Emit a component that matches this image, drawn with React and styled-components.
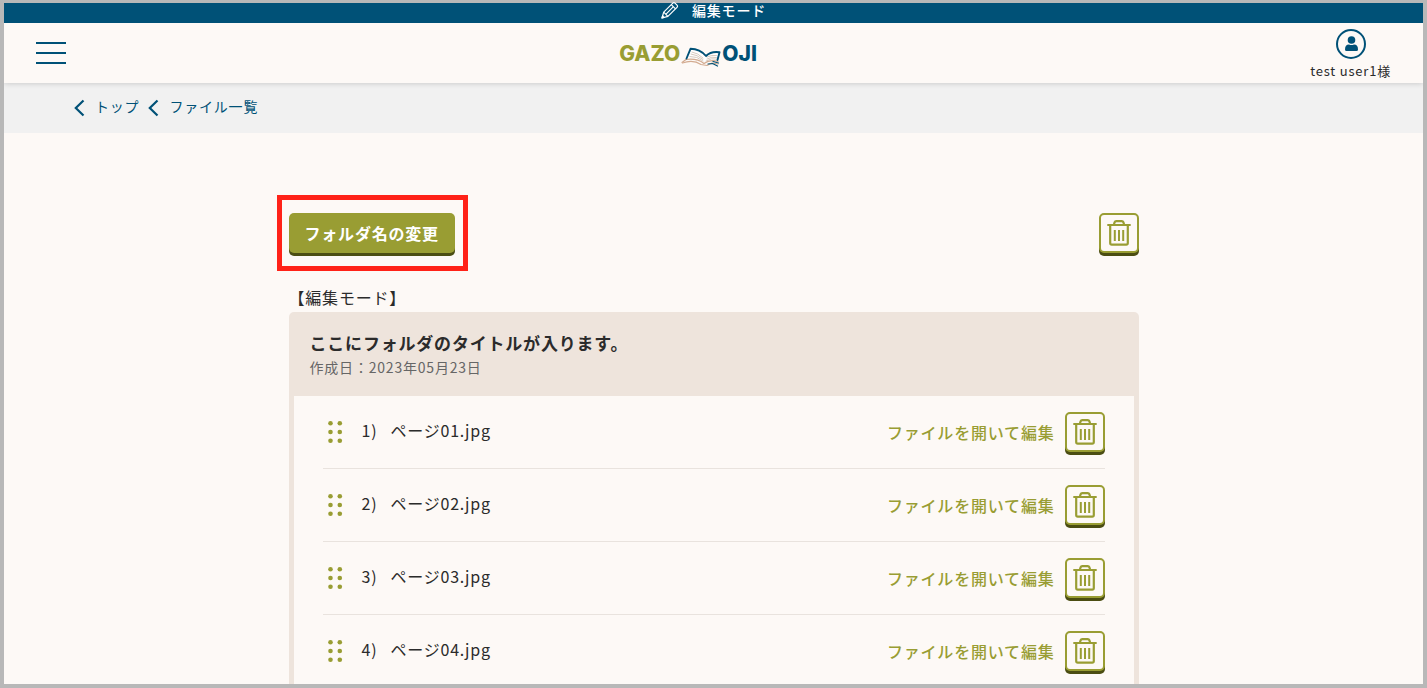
import React from "react";
import styled, { createGlobalStyle } from "styled-components";

const color = {
  page: "#fdf9f6",
  blue: "#005177",
  olive: "#999d33",
  oliveDark: "#4b4d12",
  beige: "#eee4dc",
  text: "#2b2b2b",
  frame: "#b8b8b8",
};

const GlobalStyle = createGlobalStyle`
  *, *::before, *::after { box-sizing: border-box; }
  body {
    margin: 0;
    background: ${color.frame};
    color: ${color.text};
    font-family: "Noto Sans CJK JP", "Noto Sans", sans-serif;
    font-size: 16px;
    line-height: 24px;
    letter-spacing: 0.05em;
  }
  button { font: inherit; letter-spacing: inherit; cursor: pointer; }
  a { text-decoration: none; }
  h1, p, ol { margin: 0; padding: 0; }
`;

const Frame = styled.div`
  display: flex;
  flex-direction: column;
  height: 100vh;
  padding: 3px 4px 4px;
`;

const Page = styled.div`
  flex: 1;
  min-height: 0;
  overflow-y: auto;
  scrollbar-width: none;
  background: ${color.page};
`;

const ModeBar = styled.div`
  display: flex;
  flex: none;
  justify-content: center;
  align-items: center;
  gap: 13px;
  height: 20px;
  padding-bottom: 6px;
  background: ${color.blue};
  color: #fff;
  font-size: 14px;
  font-weight: 500;
  line-height: 20px;
`;

const Header = styled.header`
  position: relative;
  display: flex;
  justify-content: space-between;
  align-items: center;
  height: 60px;
  padding: 0 32px;
  background: ${color.page};
  box-shadow: 0 0 6px rgba(0, 0, 0, 0.2);
`;

const MenuButton = styled.button`
  display: flex;
  flex-direction: column;
  gap: 8px;
  width: 30px;
  padding: 0;
  border: 0;
  background: none;
`;

const MenuLine = styled.span`
  height: 2px;
  width: 100%;
  background: ${color.blue};
`;

const Logo = styled.a`
  display: flex;
  align-items: center;
  gap: 1px;
  padding-top: 2px;
  font-family: Inter, sans-serif;
  font-size: 21px;
  font-weight: 800;
  line-height: 20px;
  letter-spacing: 0;
`;

const LogoWord = styled.span`
  color: ${(p) => (p.$accent ? color.olive : color.blue)};
`;

const UserLink = styled.a`
  display: flex;
  flex-direction: column;
  align-items: center;
  gap: 2px;
  padding-top: 4px;
  color: ${color.text};
  font-size: 13px;
  line-height: 20px;
`;

const Breadcrumbs = styled.nav`
  display: flex;
  align-items: center;
  gap: 9px;
  height: 50px;
  padding: 0 70px;
  background: #f1f1f1;
`;

const Crumb = styled.a`
  display: flex;
  align-items: center;
  gap: 10px;
  color: ${color.blue};
  font-size: 14px;
  line-height: 20px;
`;

const CrumbText = styled.span`
  padding-bottom: 4px;
`;

const Main = styled.main`
  max-width: 850px;
  margin: 0 auto;
  padding-top: 80px;
`;

const Toolbar = styled.div`
  display: flex;
  justify-content: space-between;
`;

const Highlight = styled.div`
  position: relative;
  &::after {
    content: "";
    position: absolute;
    inset: -18px -13px -18px -12px;
    border: 5px solid #ff2218;
    pointer-events: none;
  }
`;

const SolidButton = styled.button`
  display: block;
  height: 40px;
  padding: 0 16px;
  border: 0;
  border-radius: 5px;
  background: ${color.olive};
  box-shadow: 0 3px 0 ${color.oliveDark};
  color: #fff;
  font-weight: 700;
`;

const IconButton = styled.button`
  display: flex;
  justify-content: center;
  align-items: center;
  flex: none;
  width: 40px;
  height: 40px;
  padding: 0;
  border: 2px solid ${color.olive};
  border-radius: 5px;
  background: ${color.page};
  box-shadow: 0 3px 0 ${color.oliveDark};
  color: ${color.olive};
`;

const ModeLabel = styled.p`
  padding: 32px 0 3px;
`;

const Card = styled.section`
  padding: 0 5px 5px;
  border-radius: 5px;
  background: ${color.beige};
`;

const CardHeader = styled.div`
  padding: 18px 16px;
`;

const CardTitle = styled.h1`
  font-size: 17px;
  font-weight: 700;
  line-height: 26px;
`;

const CardDate = styled.p`
  color: #666;
  font-size: 14px;
  line-height: 22px;
`;

const FileList = styled.ol`
  padding: 0 29px;
  background: ${color.page};
  list-style: none;
`;

const FileRow = styled.li`
  display: flex;
  align-items: center;
  padding: 16px 0;
  border-bottom: 1px solid #e9e3de;
`;

const DragHandle = styled.button`
  display: flex;
  padding: 0 5px;
  border: 0;
  background: none;
`;

const FileName = styled.span`
  display: flex;
  flex: 1;
  gap: 13px;
  padding: 0 0 4px 14px;
`;

const EditLink = styled.a`
  margin-right: 10px;
  color: ${color.olive};
  font-weight: 500;
`;

const PencilIcon = () => (
  <svg width="18" height="18" viewBox="0 0 18 18" fill="none" stroke="#fff" strokeWidth="1.2" strokeLinejoin="round" aria-hidden="true">
    <path d="M1 17 2.7 11.2 11.8 2.1Q12.9 1 14 2.1L16 4.1Q17.1 5.2 16 6.3L6.9 15.4Z" />
    <path d="M2.7 11.2 6.9 15.4M10.3 3.6 14.5 7.8M4.8 13.3 12.4 5.7" />
    <path d="M1 17 1.6 14.9 3.1 16.4Z" fill="#fff" />
  </svg>
);

const BookIcon = () => (
  <svg width="40" height="28" viewBox="0 -6 40 28" fill="none" strokeLinecap="round" strokeLinejoin="round" aria-hidden="true">
    <path d="M6 13 10 4Q18 5 24 11L23 17Q16 11 6 13Z" fill="#fff" />
    <path d="M24 11Q30 6 37 8L36 15Q30 12 23 17Z" fill="#fff" />
    <g stroke="#cdbbac" strokeWidth="0.8">
      <path d="M11 6Q17 7 22 12M10 8Q16 8.500 22 13.500M9 10.500Q16 10 22 15" />
      <path d="M26 11Q31 8.500 35.500 9.500M26 13Q31 10 35.500 11.500M25 15Q31 11.500 35.500 13" />
    </g>
    <path d="M1 16.500 5 13.500Q16 12 23 17.500Q29 13 37 15.500" stroke="#d3ab90" strokeWidth="1.2" />
    <path d="M1.500 17Q12 13 20 18.500L26 19.500 31 17 37 18" stroke="#d3ab90" strokeWidth="1.2" />
    <path d="M5.500 12.500 9.500 2.800Q19 3 25 10Q30 5 38.500 6.300L36.500 14" stroke={color.blue} strokeWidth="1.9" />
    <path d="M27 18 31.500 17.500 36.500 20M32 15.500 37.500 17" stroke={color.blue} strokeWidth="1.2" />
  </svg>
);

const UserIcon = () => (
  <svg width="30" height="30" viewBox="0 0 30 30" aria-hidden="true">
    <circle cx="15" cy="15" r="14" fill="none" stroke={color.blue} strokeWidth="2" />
    <circle cx="15.500" cy="11" r="3.800" fill={color.blue} />
    <path d="M9 20.500Q9 15.500 13 15.500Q15.500 16.600 18 15.500Q22 15.500 22 20.500Q22 22 20.500 22H10.500Q9 22 9 20.500Z" fill={color.blue} />
  </svg>
);

const ChevronIcon = () => (
  <svg width="11" height="18" viewBox="0 0 11 18" fill="none" stroke={color.blue} strokeWidth="2.2" aria-hidden="true">
    <path d="M9.500 1.500 1.800 9 9.500 16.500" />
  </svg>
);

const TrashIcon = () => (
  <svg width="24" height="26" viewBox="0 0 24 26" fill="none" stroke="currentColor" strokeWidth="2.2" aria-hidden="true">
    <path d="M0.300 5H23.700M6.800 5 7.500 2.500Q8 1.200 9.300 1.200H14.700Q16 1.200 16.500 2.500L17.200 5" />
    <path d="M3.200 5V23Q3.200 24.600 4.800 24.600H19.200Q20.800 24.600 20.800 23V5" />
    <path d="M7.800 10V21M12 10V21M16.200 10V21" strokeWidth="2" />
  </svg>
);

const DotsIcon = () => (
  <svg width="15" height="22" viewBox="0 0 15 22" fill={color.olive} aria-hidden="true">
    {[2.3, 11, 19.7].map((y) => (
      <React.Fragment key={y}>
        <circle cx="2.500" cy={y} r="2.300" />
        <circle cx="11.800" cy={y} r="2.300" />
      </React.Fragment>
    ))}
  </svg>
);

const files = ["ページ01.jpg", "ページ02.jpg", "ページ03.jpg", "ページ04.jpg"];

export default function App() {
  return (
    <Frame>
      <GlobalStyle />
      <ModeBar>
        <PencilIcon />
        <span>編集モード</span>
      </ModeBar>
      <Page>
        <Header>
          <MenuButton type="button" aria-label="メニュー">
            <MenuLine />
            <MenuLine />
            <MenuLine />
          </MenuButton>
          <Logo href="#">
            <LogoWord $accent>GAZO</LogoWord>
            <BookIcon />
            <LogoWord>OJI</LogoWord>
          </Logo>
          <UserLink href="#">
            <UserIcon />
            <span>test user1様</span>
          </UserLink>
        </Header>
        <Breadcrumbs>
          {["トップ", "ファイル一覧"].map((label) => (
            <Crumb key={label} href="#">
              <ChevronIcon />
              <CrumbText>{label}</CrumbText>
            </Crumb>
          ))}
        </Breadcrumbs>
        <Main>
          <Toolbar>
            <Highlight>
              <SolidButton type="button">フォルダ名の変更</SolidButton>
            </Highlight>
            <IconButton type="button" aria-label="フォルダを削除">
              <TrashIcon />
            </IconButton>
          </Toolbar>
          <ModeLabel>【編集モード】</ModeLabel>
          <Card>
            <CardHeader>
              <CardTitle>ここにフォルダのタイトルが入ります。</CardTitle>
              <CardDate>作成日：2023年05月23日</CardDate>
            </CardHeader>
            <FileList>
              {files.map((name, i) => (
                <FileRow key={name}>
                  <DragHandle type="button" aria-label="並べ替え">
                    <DotsIcon />
                  </DragHandle>
                  <FileName>
                    <span>{i + 1})</span>
                    <span>{name}</span>
                  </FileName>
                  <EditLink href="#">ファイルを開いて編集</EditLink>
                  <IconButton type="button" aria-label={`${name}を削除`}>
                    <TrashIcon />
                  </IconButton>
                </FileRow>
              ))}
            </FileList>
          </Card>
        </Main>
      </Page>
    </Frame>
  );
}
